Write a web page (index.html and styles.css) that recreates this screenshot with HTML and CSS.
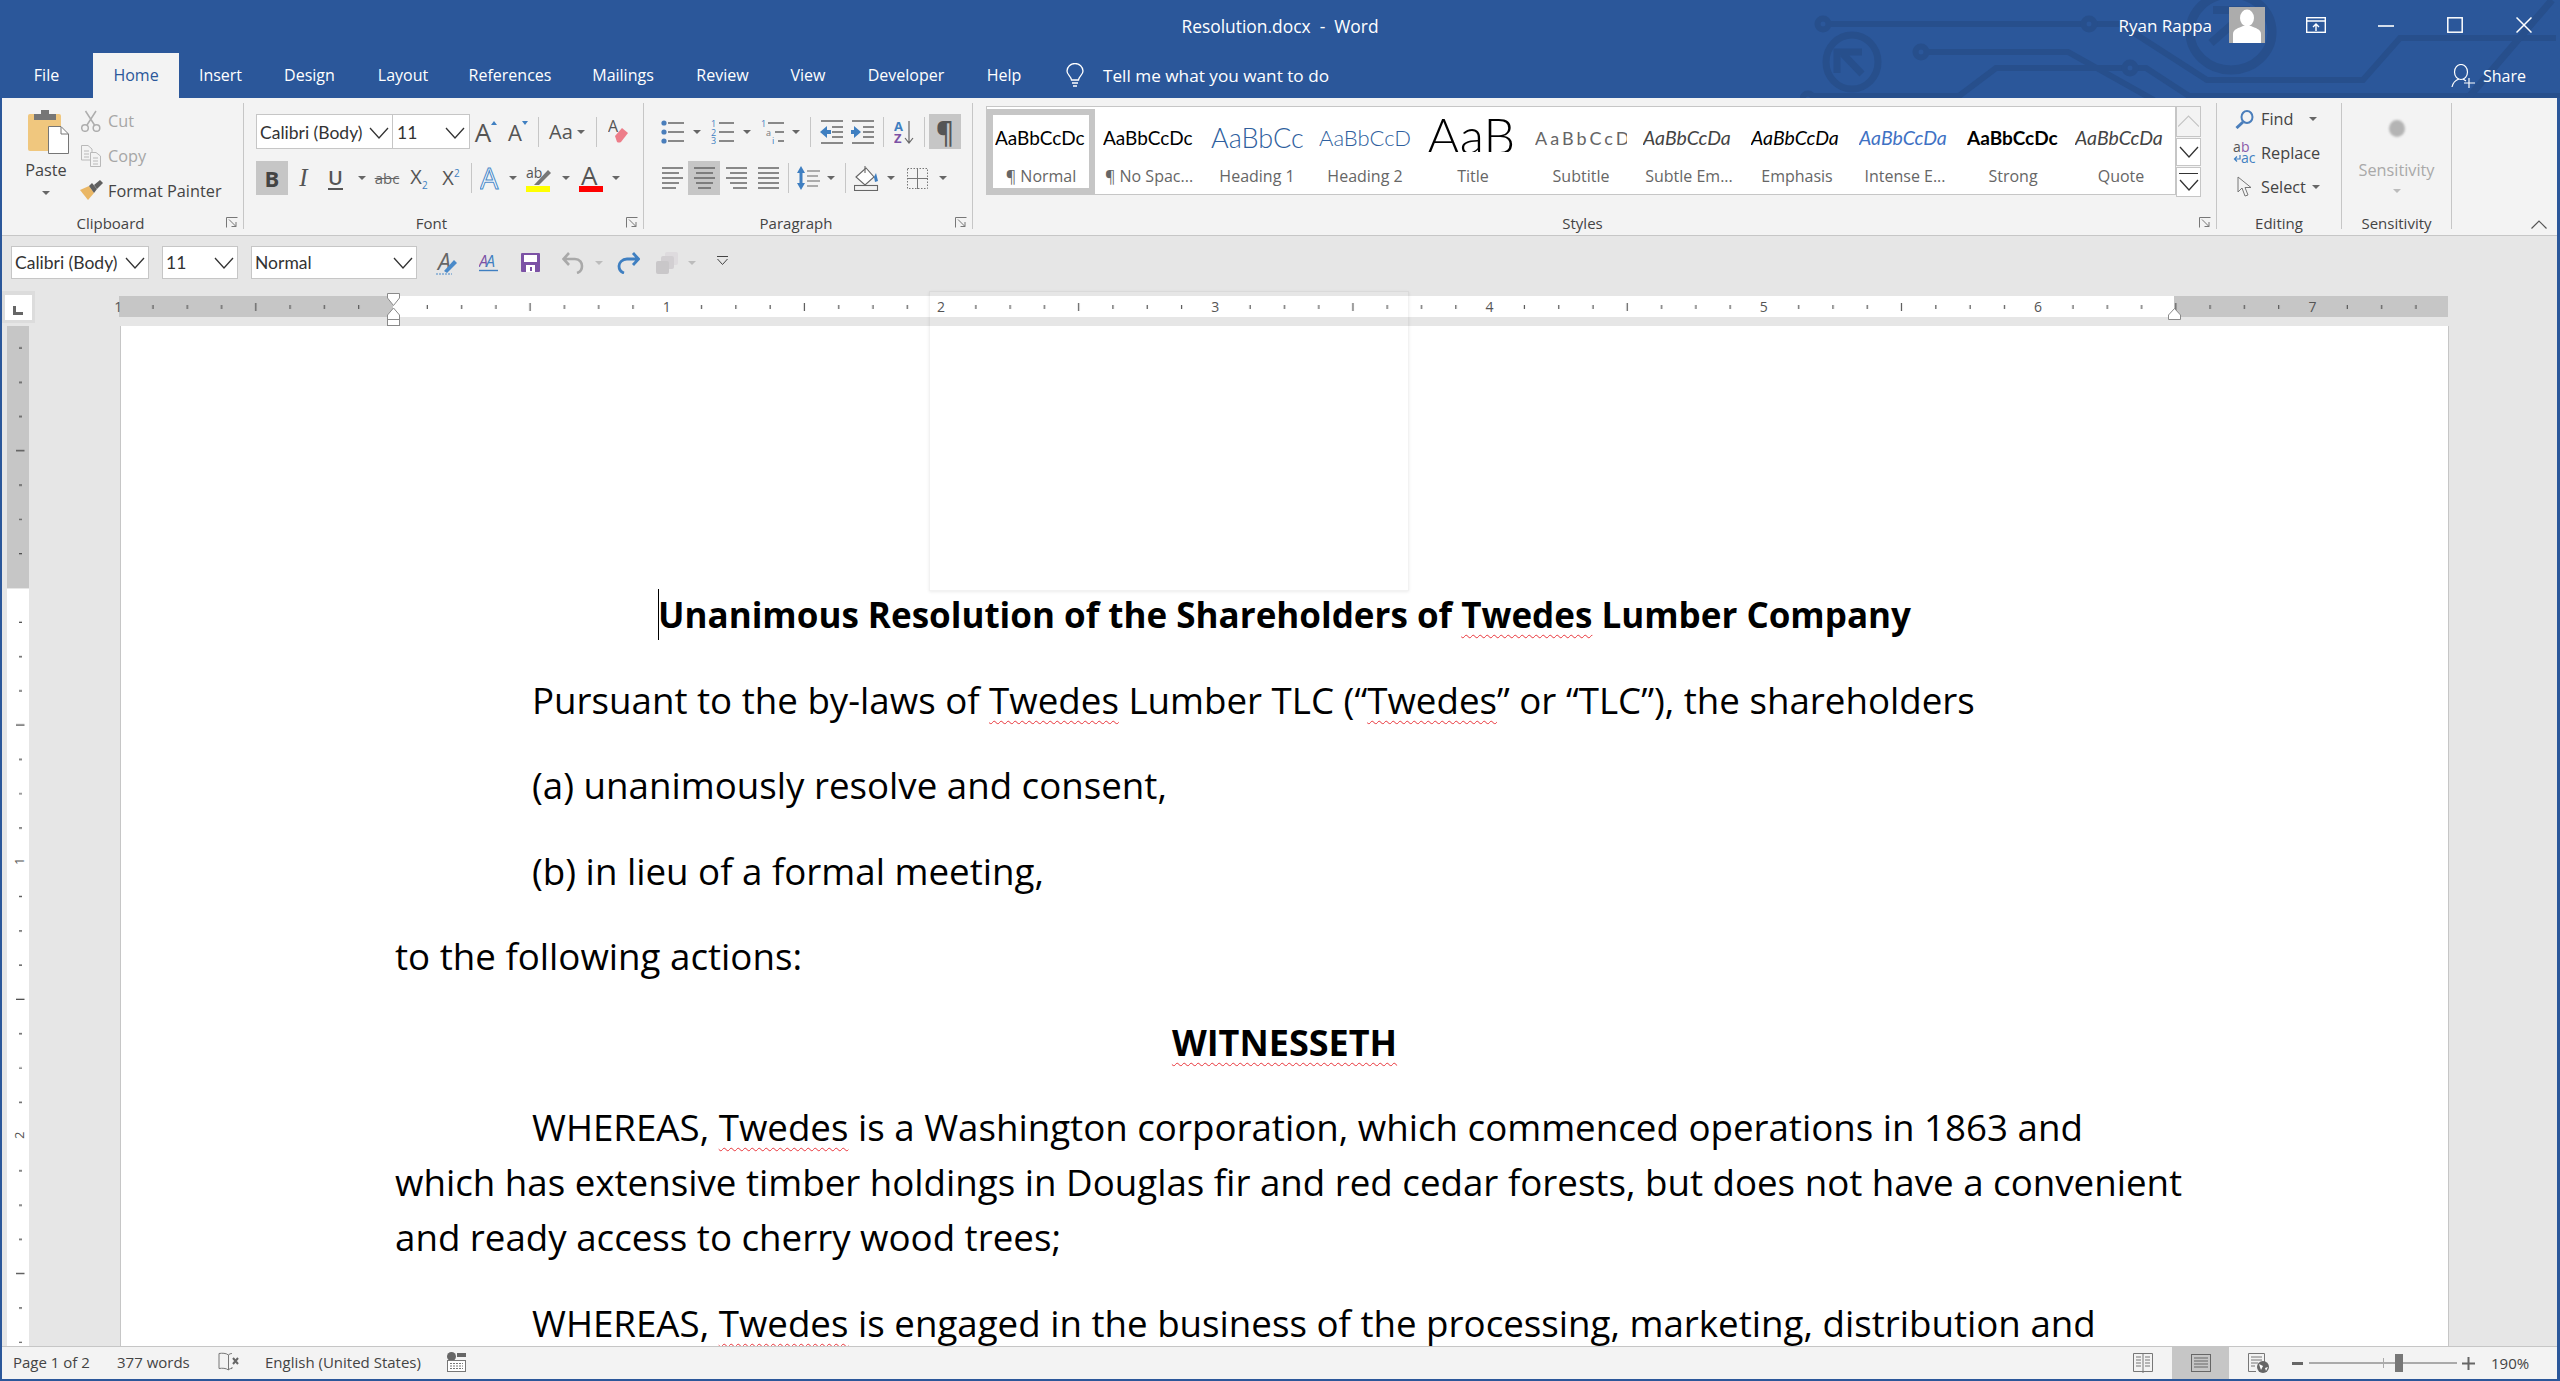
FILE: index.html
```html
<!DOCTYPE html>
<html lang="en">
<head>
<meta charset="utf-8">
<title>Resolution.docx - Word</title>
<link rel="stylesheet" href="styles.css">
</head>
<body>
<div class="window">
  <header class="head">
    <svg class="circuit" width="760" height="98" viewBox="1800 0 760 98" fill="none" stroke="#274f8c" stroke-width="6">
      <circle cx="1823" cy="24" r="5.5"/><path d="M1829 24H2083M2095 24H2120L2207 80H2363L2400 38H2556"/><circle cx="2089" cy="24" r="5.5"/>
      <ellipse cx="1852" cy="62" rx="26" ry="27" stroke-width="7"/><path d="M1837 73V52H1862M1843 54L1862 74" stroke-width="7"/>
      <circle cx="1921" cy="52" r="5.5"/><path d="M1927 52H2068L2154 100"/>
      <circle cx="1808" cy="99" r="5.5"/><path d="M1814 96H1959L1996 68H2124M2136 68H2146L2189 96H2560"/><circle cx="2130" cy="68" r="5.5"/>
      <ellipse cx="2231" cy="32" rx="41" ry="38" stroke-width="9"/><path d="M2211 43L2235 22M2213 10H2250" stroke-width="8"/>
      <path d="M2552 0L2468 98" stroke-width="7"/>
    </svg>
    <div class="titlebar">
      <div></div>
      <div class="doc-title">Resolution.docx&nbsp; - &nbsp;Word</div>
      <div class="win-right">
        <span class="user">Ryan Rappa</span>
        <svg class="avatar" width="36" height="36" viewBox="0 0 36 36"><rect width="36" height="36" fill="#acacac"/><ellipse cx="18" cy="11" rx="7" ry="8.5" fill="#fff"/><path d="M4 36V27C4 22 10 21 14 19H22C26 21 32 22 32 27V36Z" fill="#fff"/></svg>
        <svg class="wbtn w-disp" width="20" height="16" viewBox="0 0 20 16" fill="none" stroke="#fff" stroke-width="1.4"><rect x=".7" y=".7" width="18.6" height="14.6"/><path d="M1 4H19M10 14V7M7 10L10 7L13 10"/></svg>
        <svg class="wbtn w-min" width="16" height="16" viewBox="0 0 16 16" stroke="#fff" stroke-width="1.6"><path d="M0 9H16"/></svg>
        <svg class="wbtn w-max" width="16" height="16" viewBox="0 0 16 16" fill="none" stroke="#fff" stroke-width="1.5"><rect x=".8" y=".8" width="14.4" height="14.4"/></svg>
        <svg class="wbtn w-close" width="16" height="16" viewBox="0 0 16 16" stroke="#fff" stroke-width="1.5"><path d="M.5 .5L15.5 15.5M15.5 .5L.5 15.5"/></svg>
      </div>
    </div>
    <nav class="tabrow">
      <div class="tabs">
        <a class="tab">File</a><a class="tab active">Home</a><a class="tab">Insert</a><a class="tab">Design</a><a class="tab">Layout</a><a class="tab">References</a><a class="tab">Mailings</a><a class="tab">Review</a><a class="tab">View</a><a class="tab">Developer</a><a class="tab">Help</a>
      </div>
      <div class="tellme">
        <svg width="18" height="25" viewBox="0 0 18 25" fill="none" stroke="#fff" stroke-width="1.3"><path d="M5.5 17C5 13 1 12 1 8A8 7.5 0 0 1 17 8C17 12 13 13 12.5 17ZM6 20H12M7 23H11"/></svg>
        <span>Tell me what you want to do</span>
      </div>
      <div class="share">
        <svg width="25" height="24" viewBox="0 0 25 24" fill="none" stroke="#fff" stroke-width="1.2"><ellipse cx="10" cy="8" rx="6.5" ry="7.5"/><path d="M1 23C2 18 5 16 8 15M12 15L15 17M18 14V24M13 19H24"/></svg>
        <span>Share</span>
      </div>
    </nav>
  </header>

  <section class="ribbon">
    <div class="group g-clip">
      <div class="clip-body">
        <div class="paste">
          <svg class="paste-ic" width="41" height="45" viewBox="0 0 41 45"><rect y="5" width="33" height="37" rx="2" fill="#f0c77e"/><path d="M6 11V5H13V1H21V5H28V11Z" fill="#767676"/><path d="M20.5 17.5H33L40.5 25V44.5H20.5Z" fill="#fff" stroke="#767676"/><path d="M33 18V25H40" fill="none" stroke="#767676"/></svg>
          <span class="paste-label">Paste</span>
          <i class="arr"></i>
        </div>
        <div class="clip-list">
          <div class="clip-row dis"><span class="clip-ic"><svg width="20" height="22" viewBox="0 0 20 22" fill="none" stroke="#aeaeae" stroke-width="1.5"><circle cx="4" cy="18" r="3.3"/><circle cx="15.5" cy="18" r="3.3"/><path d="M6 15L15 1M13.5 15L4.5 1"/></svg></span>Cut</div>
          <div class="clip-row dis"><span class="clip-ic"><svg width="20" height="22" viewBox="0 0 20 22" fill="#f3f3f3" stroke="#b9b9b9"><path d="M.5 .5H7L11 4V15H.5Z"/><path d="M9.5 7.5H15L19.5 11V21.5H9.5Z"/><path d="M3 6H8M3 9H8M3 12H8M12 13H17M12 16H17M12 19H17" fill="none"/></svg></span>Copy</div>
          <div class="clip-row"><span class="clip-ic"><svg width="23" height="21" viewBox="0 0 23 21"><path d="M0 10L9 6L14 13L8 20Z" fill="#eab765"/><path d="M9 6L12 3L17 9L14 13Z" fill="#5f5f5f"/><path d="M14 5L20 0L23 3L17 9Z" fill="#5f5f5f"/></svg></span>Format Painter</div>
        </div>
      </div>
      <div class="glabel launch">Clipboard</div>
      <svg class="launcher" width="12" height="11" viewBox="0 0 12 11" fill="none" stroke="#777"><path d="M.5 10.5V.5H11.5M3 2.5L10 9.5M10 5V9.5H5.5"/></svg>
    </div>

    <div class="group g-font">
      <div class="grid font1">
        <div class="combo fontbox"><span>Calibri (Body)</span><svg class="chev" width="20" height="12" viewBox="0 0 20 12" fill="none" stroke="#333" stroke-width="1.3"><path d="M1 1L10 11L19 1"/></svg></div>
        <div class="combo sizebox"><span>11</span><svg class="chev" width="20" height="12" viewBox="0 0 20 12" fill="none" stroke="#333" stroke-width="1.3"><path d="M1 1L10 11L19 1"/></svg></div>
        <div class="c"><span class="glyph-a big">A</span><i class="tri-up"></i></div>
        <div class="c"><span class="glyph-a small">A</span><i class="tri-dn"></i></div>
        <div class="c"><i class="sep"></i></div>
        <div class="c"><span class="glyph-aa">Aa</span><i class="arr arr-l"></i></div>
        <div class="c"><i class="sep"></i></div>
        <div class="c"><svg width="21" height="28" viewBox="0 0 21 28"><text x="0" y="14" class="svgt" font-size="16" fill="#555">A</text><path d="M7 18L14 10L20 15L13 24Q11 25 9 24Z" fill="#ed7d89"/></svg></div>
      </div>
      <div class="grid font2">
        <div class="c on"><b class="glyph-b">B</b></div>
        <div class="c"><i class="glyph-i">I</i></div>
        <div class="c"><span class="glyph-u">U</span></div>
        <div class="c"><i class="arr"></i></div>
        <div class="c"><span class="glyph-abc">abc</span></div>
        <div class="c"><span class="glyph-x">X<sub>2</sub></span></div>
        <div class="c"><span class="glyph-x">X<sup>2</sup></span></div>
        <div class="c"><i class="sep"></i></div>
        <div class="c"><svg width="22" height="26" viewBox="0 0 22 26"><text x="0" y="24" class="svgt" font-size="29" fill="#fff" stroke="#4a8ac9" stroke-width="1">A</text></svg></div>
        <div class="c"><i class="arr"></i></div>
        <div class="c"><svg width="26" height="27" viewBox="0 0 26 27"><text x="0" y="13" class="svgt" font-size="14" fill="#555">ab</text><path d="M8 20L22 5L25 8L13 20Z" fill="#777"/><rect y="21" width="24" height="6" fill="#ff0"/></svg></div>
        <div class="c"><i class="arr"></i></div>
        <div class="c"><svg width="24" height="27" viewBox="0 0 24 27"><text x="2" y="20" class="svgt" font-size="26" fill="#555">A</text><rect y="21" width="24" height="6" fill="#f00"/></svg></div>
        <div class="c"><i class="arr"></i></div>
      </div>
      <div class="glabel launch lab-font">Font</div>
      <svg class="launcher" width="12" height="11" viewBox="0 0 12 11" fill="none" stroke="#777"><path d="M.5 10.5V.5H11.5M3 2.5L10 9.5M10 5V9.5H5.5"/></svg>
    </div>

    <div class="group g-para">
      <div class="grid para1">
        <div class="c"><svg width="23" height="24" viewBox="0 0 23 24" fill="none" stroke="#666" stroke-width="1.3"><path d="M7 3H23M7 12H23M7 21H23"/><g fill="#4a7ebb" stroke="none"><circle cx="3" cy="3" r="2.6"/><circle cx="3" cy="12" r="2.6"/><circle cx="3" cy="21" r="2.6"/></g></svg></div>
        <div class="c"><i class="arr"></i></div>
        <div class="c"><svg width="23" height="24" viewBox="0 0 23 24"><g class="svgt" font-size="9" fill="#3f7fc1"><text x="0" y="7">1</text><text x="0" y="15.5">2</text><text x="0" y="24">3</text></g><path d="M8 3H23M8 12H23M8 21H23" stroke="#666" stroke-width="1.3"/></svg></div>
        <div class="c"><i class="arr"></i></div>
        <div class="c"><svg width="23" height="24" viewBox="0 0 23 24"><g class="svgt" font-size="9" fill="#3f7fc1"><text x="0" y="7">1</text><text x="5" y="15.5" fill="#777">a</text><text x="11" y="24">i</text></g><path d="M7 3H23M14 12H23M17 21H23" stroke="#666" stroke-width="1.3"/></svg></div>
        <div class="c"><i class="arr"></i></div>
        <div class="c"><i class="sep"></i></div>
        <div class="c"><svg width="23" height="24" viewBox="0 0 23 24" fill="none" stroke="#666" stroke-width="1.3"><path d="M1 1H23M12 7H23M12 12H23M12 17H23M1 23H23"/><path d="M0 12L7 6V10H11V14H7V18Z" fill="#3f7fc1" stroke="none"/></svg></div>
        <div class="c"><svg width="23" height="24" viewBox="0 0 23 24" fill="none" stroke="#666" stroke-width="1.3"><path d="M1 1H23M12 7H23M12 12H23M12 17H23M1 23H23"/><path d="M10 12L3 6V10H0V14H3V18Z" fill="#3f7fc1" stroke="none"/></svg></div>
        <div class="c"><i class="sep"></i></div>
        <div class="c"><svg width="21" height="24" viewBox="0 0 21 24"><text x="0" y="11" class="svgt bold" font-size="13" fill="#3f7fc1">A</text><text x="0" y="23" class="svgt bold" font-size="13" fill="#7c52a5">Z</text><path d="M15 1V22M11 18L15 23L19 18" fill="none" stroke="#666" stroke-width="1.2"/></svg></div>
        <div class="c"><i class="sep"></i></div>
        <div></div>
        <div class="c on"><span class="pil">¶</span></div>
      </div>
      <div class="grid para2">
        <div class="c"><svg class="al" width="21" height="22" viewBox="0 0 21 22"><path d="M0 1H21M0 6H17M0 11H21M0 16H17M0 21H14"/></svg></div>
        <div class="c on"><svg class="al" width="21" height="22" viewBox="0 0 21 22"><path d="M0 1H21M2 6H19M0 11H21M2 16H19M4 21H17"/></svg></div>
        <div class="c"><svg class="al" width="21" height="22" viewBox="0 0 21 22"><path d="M0 1H21M4 6H21M0 11H21M4 16H21M7 21H21"/></svg></div>
        <div class="c"><svg class="al" width="21" height="22" viewBox="0 0 21 22"><path d="M0 1H21M0 6H21M0 11H21M0 16H21M0 21H21"/></svg></div>
        <div class="c"><i class="sep"></i></div>
        <div class="c"><svg width="23" height="24" viewBox="0 0 23 24"><path d="M4 0L8 7H5.5V17H8L4 24L0 17H2.5V7H0Z" fill="#3f7fc1"/><path d="M10 5H23M10 10H21M10 15H23M10 20H21" stroke="#666" stroke-width="1.2"/></svg></div>
        <div class="c"><i class="arr"></i></div>
        <div class="c"><i class="sep"></i></div>
        <div class="c"><svg width="25" height="25" viewBox="0 0 25 25" fill="none" stroke="#666" stroke-width="1.1"><path d="M2 11L12 2L20 11L11 19Z" fill="#fff"/><path d="M11 0V7"/><path d="M20 11L22 7L24 15L21 16Z" fill="#3f7fc1" stroke="none"/><rect x=".5" y="19.5" width="23" height="5" fill="#f3f3f3"/></svg></div>
        <div class="c"><i class="arr"></i></div>
        <div class="c"><svg width="21" height="21" viewBox="0 0 21 21" fill="none" stroke="#777" stroke-dasharray="1.5 1.5"><rect x=".5" y=".5" width="20" height="20"/><path d="M10.5 0V21M0 10.5H21" stroke-dasharray="none"/></svg></div>
        <div class="c"><i class="arr"></i></div>
      </div>
      <div class="glabel launch">Paragraph</div>
      <svg class="launcher" width="12" height="11" viewBox="0 0 12 11" fill="none" stroke="#777"><path d="M.5 10.5V.5H11.5M3 2.5L10 9.5M10 5V9.5H5.5"/></svg>
    </div>

    <div class="group g-styles">
      <div class="gallery-wrap">
        <div class="gallery">
          <div class="style sel"><div class="pv">AaBbCcDc</div><div class="st-name">¶ Normal</div></div>
          <div class="style"><div class="pv">AaBbCcDc</div><div class="st-name">¶ No Spac...</div></div>
          <div class="style"><div class="pv h1">AaBbCc</div><div class="st-name">Heading 1</div></div>
          <div class="style"><div class="pv h2">AaBbCcD</div><div class="st-name">Heading 2</div></div>
          <div class="style"><div class="pv ttl"><span>AaB</span></div><div class="st-name">Title</div></div>
          <div class="style"><div class="pv sub">AaBbCcD</div><div class="st-name">Subtitle</div></div>
          <div class="style"><div class="pv em gr">AaBbCcDa</div><div class="st-name">Subtle Em...</div></div>
          <div class="style"><div class="pv em">AaBbCcDa</div><div class="st-name">Emphasis</div></div>
          <div class="style"><div class="pv em bl">AaBbCcDa</div><div class="st-name">Intense E...</div></div>
          <div class="style"><div class="pv strong">AaBbCcDc</div><div class="st-name">Strong</div></div>
          <div class="style"><div class="pv em gr">AaBbCcDa</div><div class="st-name">Quote</div></div>
        </div>
        <div class="gal-scroll">
          <div class="gs"><svg width="21" height="12" viewBox="0 0 21 12" fill="none" stroke="#c4c4c4" stroke-width="1.2"><path d="M0 11.5L10.5 1L21 11.5"/></svg></div>
          <div class="gs"><svg width="20" height="12" viewBox="0 0 20 12" fill="none" stroke="#333" stroke-width="1.3"><path d="M1 1L10 11L19 1"/></svg></div>
          <div class="gs gs-more"><i class="more-bar"></i><svg width="20" height="12" viewBox="0 0 20 12" fill="none" stroke="#333" stroke-width="1.3"><path d="M1 1L10 11L19 1"/></svg></div>
        </div>
      </div>
      <div class="glabel launch lab-styles">Styles</div>
      <svg class="launcher" width="12" height="11" viewBox="0 0 12 11" fill="none" stroke="#777"><path d="M.5 10.5V.5H11.5M3 2.5L10 9.5M10 5V9.5H5.5"/></svg>
    </div>

    <div class="group g-edit">
      <div class="edit-list">
        <div class="edit-row"><span class="edit-ic"><svg width="19" height="19" viewBox="0 0 19 19" fill="none" stroke="#4a7ebb" stroke-width="2"><ellipse cx="12" cy="7" rx="5.5" ry="6"/><path d="M8 12L1.5 18" stroke-width="3"/></svg></span>Find<i class="arr arr-find"></i></div>
        <div class="edit-row"><span class="edit-ic"><svg width="23" height="22" viewBox="0 0 23 22"><text x="0" y="10" class="svgt" font-size="14" fill="#555">a</text><text x="8" y="10" class="svgt" font-size="14" fill="#8a5aa8">b</text><text x="8" y="21" class="svgt" font-size="14" fill="#3f7fc1">ac</text><path d="M7 13V17H2M4 14.5L1.5 17L4 19.5" fill="none" stroke="#3f7fc1" stroke-width="1.2"/></svg></span>Replace</div>
        <div class="edit-row"><span class="edit-ic"><svg width="15" height="22" viewBox="0 0 15 22" fill="#f3f3f3" stroke="#777"><path d="M1 1V16L5 12L8 20L11 19L8 11.5H14Z"/></svg></span>Select<i class="arr arr-sel"></i></div>
      </div>
      <div class="glabel">Editing</div>
    </div>

    <div class="group g-sens">
      <div class="sens-body">
        <i class="sens-dot"></i>
        <span class="sens-text">Sensitivity</span>
        <i class="arr arr-dis"></i>
      </div>
      <div class="glabel">Sensitivity</div>
    </div>

    <div class="ribbon-end">
      <svg width="16" height="9" viewBox="0 0 16 9" fill="none" stroke="#555" stroke-width="1.2"><path d="M.5 8.5L8 1L15.5 8.5"/></svg>
    </div>
  </section>

  <main class="editor">
    <div class="qat">
      <div class="combo q-font"><span>Calibri (Body)</span><svg width="20" height="12" viewBox="0 0 20 12" fill="none" stroke="#333" stroke-width="1.3"><path d="M1 1L10 11L19 1"/></svg></div>
      <div class="combo q-size"><span>11</span><svg width="20" height="12" viewBox="0 0 20 12" fill="none" stroke="#333" stroke-width="1.3"><path d="M1 1L10 11L19 1"/></svg></div>
      <div class="combo q-style"><span>Normal</span><svg width="20" height="12" viewBox="0 0 20 12" fill="none" stroke="#333" stroke-width="1.3"><path d="M1 1L10 11L19 1"/></svg></div>
      <div class="qat-icons">
        <div class="c"><svg width="22" height="24" viewBox="0 0 22 24"><text x="2" y="19" class="svgt ital" font-size="23" fill="#666">A</text><path d="M8 20L18 9L21 12L11 22Z" fill="#4a8ac9"/><path d="M0 23H16" stroke="#4a8ac9" stroke-dasharray="2 1"/></svg></div>
        <div class="c"><svg width="19" height="19" viewBox="0 0 19 19"><text x="0" y="14" class="svgt ital" font-size="16" fill="#7c52a5">A</text><text x="7" y="14" class="svgt ital" font-size="16" fill="#3f7fc1">A</text><path d="M0 17.5H19" stroke="#3f7fc1" stroke-width="1.4"/></svg></div>
        <div class="c"><svg width="19" height="19" viewBox="0 0 19 19"><path d="M0 1Q0 0 1 0H18Q19 0 19 1V18Q19 19 18 19H1Q0 19 0 18Z" fill="#7c52a5"/><rect x="3" y="2" width="13" height="7" fill="#fff"/><rect x="5" y="12" width="9" height="7" fill="#fff"/><rect x="9" y="14" width="2" height="4" fill="#7c52a5"/></svg></div>
        <div class="c"><svg width="22" height="22" viewBox="0 0 22 22" fill="none" stroke="#a9a9a9" stroke-width="2.6"><path d="M2 7H13C18 7 20 11 20 14C20 17 18 20 15 21M7 1L1.5 7L7 13"/></svg></div>
        <div class="c"><i class="arr arr-dis"></i></div>
        <div class="c"><svg width="23" height="22" viewBox="0 0 23 22" fill="none" stroke="#3f7fc1" stroke-width="2.8"><path d="M21 7H10C5 7 2 11 2 14C2 17 4 20 7 21M16 1L21.5 7L16 13"/></svg></div>
        <div class="c"><svg width="22" height="22" viewBox="0 0 22 22"><rect x="9" y="0" width="13" height="13" rx="2" fill="#dedbde"/><rect x="5" y="4" width="13" height="13" rx="2" fill="#d2cfd2"/><rect x="0" y="9" width="13" height="13" rx="2" fill="#c9c7c9"/></svg></div>
        <div class="c"><i class="arr arr-dis"></i></div>
        <div class="c"><svg class="cust" width="11" height="9" viewBox="0 0 11 9" fill="none" stroke="#444"><path d="M0 .5H11M.5 3L5.5 8.5L10.5 3"/></svg></div>
      </div>
    </div>

    <div class="ruler-row">
      <div class="tabstop"><span class="tabstop-in"><svg width="10" height="9" viewBox="0 0 10 9" fill="#666"><path d="M0 0H3V6H10V9H0Z"/></svg></span></div>
      <div class="ruler">
        <div class="rseg gray-l"></div><div class="rseg white"></div><div class="rseg gray-r"></div>
        <svg class="rticks" width="2329" height="21" viewBox="0 0 2329 21">
          <defs><pattern id="ht" patternUnits="userSpaceOnUse" x="274" y="0" width="274.286" height="21"><path d="M34.3 9V13M68.6 9V13M102.9 9V13M137.1 7V15M171.4 9V13M205.7 9V13M240 9V13" stroke="#555" stroke-width="1.2"/></pattern></defs>
          <rect width="2329" height="21" fill="url(#ht)"/>
        </svg>
        <div class="rnums"><span>1</span><span></span><span>1</span><span>2</span><span>3</span><span>4</span><span>5</span><span>6</span><span>7</span></div>
        <svg class="ind-l" width="13" height="33" viewBox="0 0 13 33" fill="#fff" stroke="#8a8a8a"><path d="M.5 .5H12.5V5L6.5 12.5L.5 5Z"/><path d="M6.5 15L12.5 22V26.5H.5V22Z"/><rect x=".5" y="26.5" width="12" height="6"/></svg>
        <svg class="ind-r" width="13" height="12" viewBox="0 0 13 12" fill="#fff" stroke="#8a8a8a"><path d="M6.5 .5L12.5 7V11.5H.5V7Z"/></svg>
      </div>
    </div>

    <div class="workspace">
      <svg class="vruler" width="22" height="1021" viewBox="0 0 22 1021">
        <defs><pattern id="vt" patternUnits="userSpaceOnUse" x="0" y="263" width="22" height="274.286"><path d="M12 34.3H15M12 68.6H15M12 102.9H15M9 137.1H17.5M12 171.4H15M12 205.7H15M12 240H15" stroke="#444" stroke-width="1.2"/></pattern></defs>
        <rect y="1" width="22" height="262" fill="#c6c6c6"/><rect y="264" width="22" height="757" fill="#fff"/>
        <rect y="1" width="22" height="1020" fill="url(#vt)"/>
        <text class="svgt" font-size="13" fill="#555" transform="translate(17 540) rotate(-90)">1</text>
        <text class="svgt" font-size="13" fill="#555" transform="translate(17 814) rotate(-90)">2</text>
      </svg>
      <div class="page">
        <h1 class="title t-main"><span class="caret"></span>Unanimous Resolution of the Shareholders of <span class="sp">Twedes</span> Lumber Company</h1>
        <p class="p ind">Pursuant to the by-laws of <span class="sp">Twedes</span> Lumber TLC (“<span class="sp">Twedes</span>” or “TLC”), the shareholders</p>
        <p class="p ind">(a) unanimously resolve and consent,</p>
        <p class="p ind">(b) in lieu of a formal meeting,</p>
        <p class="p">to the following actions:</p>
        <h2 class="title t-sub"><span class="sp">WITNESSETH</span></h2>
        <p class="p ind">WHEREAS, <span class="sp">Twedes</span> is a Washington corporation, which commenced operations in 1863 and<br>which has extensive timber holdings in Douglas fir and red cedar forests, but does not have a convenient<br>and ready access to cherry wood trees;</p>
        <p class="p ind">WHEREAS, <span class="sp">Twedes</span> is engaged in the business of the processing, marketing, distribution and</p>
      </div>
    </div>
    <div class="ghost"></div>
  </main>

  <footer class="status">
    <span class="s-page">Page 1 of 2</span>
    <span class="s-words">377 words</span>
    <svg class="s-proof" width="21" height="20" viewBox="0 0 21 20" fill="none" stroke="#777"><path d="M10.5 3C8 1 4 1 1 1.5V16.5C4 16 8 16 10.5 18C11 17 12 16.5 14 16.5V15M10.5 3V18M10.5 3C11 2 13 1.5 14 1.5"/><path d="M15 6L20 12M20 6L15 12" stroke="#666" stroke-width="2"/></svg>
    <span class="s-lang">English (United States)</span>
    <svg class="s-macro" width="19" height="20" viewBox="0 0 19 20"><circle cx="4.5" cy="4.5" r="4.5" fill="#666"/><rect x="10" y="1" width="9" height="4" fill="#666"/><rect x=".5" y="8.5" width="18" height="11" fill="#fff" stroke="#777"/><path d="M3 11.5H16M3 14H16M3 16.5H16" stroke="#777" stroke-dasharray="2 1"/></svg>
    <div class="s-right">
      <div class="view v-read"><svg width="20" height="21" viewBox="0 0 20 21" fill="none" stroke="#777"><path d="M.5 .5H19.5V18.5H.5ZM10 .5V20"/><path d="M3 4H8M3 7H8M3 10H8M3 13H8M12 4H17M12 7H17M12 10H17M12 13H17"/></svg></div>
      <div class="view v-print"><svg width="20" height="18" viewBox="0 0 20 18" fill="none" stroke="#666"><rect x=".5" y=".5" width="19" height="17"/><path d="M3 4H17M3 7H17M3 10H17M3 13H17"/></svg></div>
      <div class="view v-web"><svg width="21" height="20" viewBox="0 0 21 20"><path d="M.5 .5H16.5V10M8 18.5H.5V.5" fill="none" stroke="#777"/><path d="M3 4H14M3 7H14M3 10H10M3 13H7" stroke="#777"/><circle cx="15" cy="14" r="6" fill="#666"/><path d="M11 11L15 13L13 17ZM17 15L20 14L18 18Z" fill="#fff"/></svg></div>
      <div class="zoom">
        <i class="z-minus"></i>
        <div class="z-track"><i class="z-mid"></i><i class="z-thumb"></i></div>
        <svg class="z-plus" width="13" height="13" viewBox="0 0 13 13" stroke="#666" stroke-width="2"><path d="M0 6.5H13M6.5 0V13"/></svg>
      </div>
      <span class="z-pct">190%</span>
    </div>
  </footer>
</div>
</body>
</html>
```

FILE: styles.css
```css
* { box-sizing: border-box; }
html, body { margin: 0; padding: 0; }
body { width: 2560px; height: 1381px; overflow: hidden; background: #2b579a; font-family: "Open Sans", "Noto Sans", sans-serif; font-size: 14px; color: #444; }
i { font-style: normal; display: block; }
.svgt { font-family: "Open Sans", sans-serif; }
.bold { font-weight: 700; }
.ital { font-style: italic; }
.window { width: 2560px; height: 1381px; display: flex; flex-direction: column; }

/* title bar */
.head { position: relative; height: 98px; flex: none; color: #fff; }
.circuit { position: absolute; top: 0; right: 0; }
.titlebar { position: relative; height: 53px; display: grid; grid-template-columns: 1fr auto 1fr; }
.doc-title { font-size: 17.4px; line-height: 52px; white-space: nowrap; }
.win-right { display: flex; justify-content: flex-end; align-items: flex-start; }
.user { font-size: 17px; line-height: 52px; margin-right: 17px; }
.avatar { margin-top: 7px; }
.wbtn { margin-top: 17px; flex: none; }
.w-disp { margin-left: 41px; }
.w-min { margin-left: 52px; }
.w-max { margin-left: 53px; }
.w-close { margin-left: 53px; margin-right: 28px; }
.tabrow { position: relative; height: 45px; display: flex; font-size: 16px; }
.tabs { display: grid; grid-template-columns: 93px 86px 83px 95px 92px 122px 104px 95px 76px 120px 76px; height: 45px; }
.tab { text-align: center; line-height: 44px; color: #fff; }
.tab.active { background: #f3f3f3; color: #2b579a; }
.tellme { display: flex; align-items: center; margin-left: 24px; height: 45px; font-size: 17.2px; }
.tellme span { margin-left: 19px; }
.share { margin-left: auto; margin-right: 34px; display: flex; align-items: center; height: 45px; gap: 7px; }

/* ribbon */
.ribbon { height: 138px; flex: none; margin: 0 3px 0 2px; background: #f3f3f3; border-bottom: 1px solid #c6c6c6; padding: 5px 0 6px; display: flex; font-size: 16.3px; }
.group { position: relative; height: 126px; flex: none; display: flex; flex-direction: column; border-right: 1px solid #c6c6c6; }
.g-clip { width: 242px; }
.g-font { width: 400px; padding: 11px 0 0 12px; }
.g-para { width: 329px; padding: 11px 0 0 12px; }
.g-styles { width: 1244px; padding: 3px 0 0 13px; }
.g-edit { width: 125px; }
.g-sens { width: 110px; }
.glabel { margin-top: auto; margin-bottom: -1px; height: 14px; line-height: 14px; font-size: 15px; color: #444; text-align: center; }
.glabel.launch { padding-right: 24px; }
.g-font .glabel, .g-para .glabel { margin-left: -12px; }
.g-styles .glabel { margin-left: -13px; }
.launcher { position: absolute; right: 5px; bottom: 1px; }
.c { display: flex; align-items: center; justify-content: center; min-width: 0; }
.c.on { background: #c6c6c6; }
.grid { display: grid; }
.arr { width: 0; height: 0; border-left: 4px solid transparent; border-right: 4px solid transparent; border-top: 4px solid #666; flex: none; }
.arr-dis { border-top-color: #bcbcbc; }
.sep { width: 1px; height: 30px; background: #c6c6c6; }

/* clipboard */
.clip-body { display: flex; padding: 0 0 0 16px; }
.paste { width: 56px; display: flex; flex-direction: column; align-items: center; padding-top: 6px; }
.paste-ic { margin-left: 5px; flex: none; }
.paste-label { line-height: 20px; margin-top: 6px; }
.paste .arr { margin-top: 11px; }
.clip-list { padding-left: 4px; }
.clip-row { height: 35px; display: flex; align-items: center; white-space: nowrap; }
.clip-row.dis { color: #a6a6a6; }
.clip-ic { width: 26px; margin-right: 4px; display: flex; justify-content: center; }

/* font */
.font1 { grid-template-columns: 137px 77px 32px 32px 8px 50px 8px 36px; height: 35px; }
.font2 { grid-template-columns: 32px 31px 33px 19px 32px 32px 32px 8px 31px 14px 38px 16px 33px 18px; height: 34px; margin-top: 12px; }
.combo { display: flex; align-items: center; justify-content: space-between; background: #fff; border: 1px solid #c6c6c6; padding: 0 3px 0 3px; font-family: "Lato", sans-serif; font-size: 17.5px; color: #333; white-space: nowrap; overflow: hidden; }
.fontbox { padding-top: 2px; }
.sizebox { margin-left: -1px; padding: 2px 4px 0 4px; }
.font1 .sep { height: 30px; }
.glyph-a { color: #555; }
.big { font-size: 26px; line-height: 1; }
.small { font-size: 22px; line-height: 1; }
.tri-up, .tri-dn { width: 0; height: 0; border-left: 3px solid transparent; border-right: 3px solid transparent; align-self: flex-start; margin-top: 7px; }
.tri-up { border-bottom: 4px solid #3f7fc1; }
.tri-dn { border-top: 4px solid #3f7fc1; }
.glyph-aa { color: #555; font-size: 20px; line-height: 1; }
.arr-l { margin-left: 4px; }
.glyph-b { font-size: 22px; color: #444; font-family: "Open Sans", sans-serif; }
.glyph-i { font-size: 25px; font-style: italic; color: #555; font-family: "Liberation Serif", serif; }
.glyph-u { font-size: 20px; color: #555; font-weight: 600; border-bottom: 2px solid #555; line-height: 21px; }
.glyph-abc { font-size: 15px; color: #666; text-decoration: line-through; }
.glyph-x { font-size: 20px; color: #555; line-height: 1; }
.glyph-x sub, .glyph-x sup { font-size: 10px; color: #3f7fc1; }

/* paragraph */
.para1 { grid-template-columns: 32px 18px 32px 18px 33px 14px 14px 28px 34px 8px 34px 6px 2px 32px; height: 35px; }
.para2 { grid-template-columns: 32px 32px 32px 32px 8px 32px 14px 14px 28px 22px 30px 21px; height: 34px; margin-top: 12px; }
.pil { font-size: 28px; line-height: 1; color: #555; font-weight: 600; }
.al { stroke: #666; stroke-width: 1.3; fill: none; }

/* styles */
.gallery-wrap { display: flex; height: 91px; }
.gallery { width: 1190px; height: 89px; background: #fff; border: 1px solid #c6c6c6; display: flex; font-family: "Lato", sans-serif; }
.style { width: 108px; flex: none; height: 85px; margin-top: 2px; display: flex; flex-direction: column; align-items: center; overflow: hidden; }
.style.sel { box-shadow: inset 0 0 0 6px #c6c6c6; }
.pv { height: 57px; width: 92px; line-height: 58px; overflow: hidden; white-space: nowrap; font-size: 19px; color: #000; flex: none; }
.h1 { font-size: 27px; color: #2f5f9e; font-weight: 300; }
.h2 { font-size: 22px; color: #2f5f9e; font-weight: 300; }
.ttl { display: flex; align-items: flex-start; }
.ttl span { display: block; height: 34px; margin-top: 9px; line-height: 34px; font-size: 50px; font-weight: 300; overflow: hidden; }
.sub { font-size: 18px; letter-spacing: 3px; color: #666; }
.em { font-style: italic; font-size: 19.5px; }
.gr { color: #444; }
.bl { color: #3f72c4; }
.strong { font-weight: 700; }
.st-name { font-family: "Open Sans", sans-serif; font-size: 16px; color: #666; line-height: 20px; white-space: nowrap; }
.gal-scroll { width: 25px; display: flex; flex-direction: column; }
.gs { height: 30px; border: 1px solid #c6c6c6; display: flex; align-items: center; justify-content: center; background: #fff; }
.gs:first-child { background: #f3f3f3; height: 31px; }
.gs:nth-child(2) { height: 29px; margin-top: 1px; }
.gs-more { flex-direction: column; gap: 5px; height: 30px; margin-top: 1px; }
.more-bar { width: 19px; height: 1px; background: #333; }

/* editing */
.edit-list { display: flex; flex-direction: column; margin-top: -1px; }
.edit-row { height: 34px; display: flex; align-items: center; padding-left: 10px; white-space: nowrap; }
.edit-ic { width: 34px; display: flex; justify-content: center; }
.arr-find { margin-left: 16px; }
.arr-sel { margin-left: 6px; }
.sens-body { display: flex; flex-direction: column; align-items: center; padding-top: 17px; color: #a9a9a9; }
.sens-dot { width: 16px; height: 17px; border-radius: 50%; background: #b4b4b4; filter: blur(1px); }
.sens-text { margin-top: 23px; line-height: 20px; }
.sens-body .arr { margin-top: 9px; }
.ribbon-end { flex: 1; display: flex; justify-content: flex-end; align-items: flex-end; padding: 0 10px 0 0; }

/* editor */
.editor { position: relative; flex: 1; min-height: 0; margin: 0 3px 0 2px; background: #e6e6e6; display: flex; flex-direction: column; overflow: hidden; }
.qat { height: 55px; flex: none; padding: 10px 0 12px 9px; display: flex; }
.q-font { width: 138px; }
.q-size { width: 76px; margin-left: 13px; }
.q-style { width: 166px; margin-left: 13px; }
.qat-icons { display: grid; grid-template-columns: 44px 38px 46px 40px 12px 46px 32px 17px 45px; margin-left: 8px; }
.cust { margin-top: -5px; }
.ruler-row { height: 34px; flex: none; display: flex; }
.tabstop { width: 33px; height: 32px; background: #dcdcdc; padding: 4px 3px; flex: none; }
.tabstop-in { display: block; background: #fff; height: 25px; padding: 11px 0 0 8px; }
.tabstop-in svg { display: block; }
.ruler { position: relative; margin: 5px 0 0 84px; width: 2329px; height: 21px; display: flex; font-size: 14px; color: #555; }
.rseg { height: 21px; }
.gray-l { width: 274px; background: #c6c6c6; }
.white { width: 1781px; background: #fff; }
.gray-r { width: 274px; background: #c6c6c6; }
.rticks { position: absolute; left: 0; top: 0; }
.rnums { position: absolute; left: -138px; top: 0; display: flex; height: 21px; line-height: 21px; }
.rnums span { width: 274.286px; text-align: center; flex: none; }
.ind-l { position: absolute; left: 268px; top: -3px; }
.ind-r { position: absolute; left: 2049px; top: 12px; }
.workspace { flex: 1; min-height: 0; display: flex; overflow: hidden; }
.vruler { margin-left: 5px; flex: none; display: block; }
.page { width: 2329px; margin-left: 91px; margin-top: 1px; background: #fff; border-left: 1px solid #c6c6c6; border-right: 1px solid #c6c6c6; padding: 261px 274px 0 274px; color: #000; font-family: "Open Sans", sans-serif; font-size: 36.7px; line-height: 55px; flex: none; overflow: hidden; white-space: nowrap; }
.title { margin: 0 0 30.5px; font: inherit; font-weight: 700; text-align: center; }
.t-main { font-size: 35px; }
.t-sub { font-size: 36px; }
.p { margin: 0 0 30.5px; }
.ind { text-indent: 137px; }
.caret { display: inline-block; width: 1px; height: 51px; background: #000; vertical-align: -12px; margin-right: -1px; }
.sp { text-decoration: underline wavy #e8343a; text-decoration-thickness: 1px; text-underline-offset: 6px; text-decoration-skip-ink: none; }
.ghost { position: absolute; left: 927px; top: 55px; width: 480px; height: 300px; border: 1px solid rgba(0,0,0,.05); box-shadow: 0 1px 3px rgba(0,0,0,.08); pointer-events: none; }

/* status */
.status { height: 33px; flex: none; margin: 0 3px 2px 2px; background: #f3f3f3; border-top: 1px solid #c6c6c6; padding-bottom: 2px; display: flex; align-items: center; font-size: 15px; color: #444; white-space: nowrap; }
.s-page { margin-left: 11px; width: 104px; }
.s-words { width: 101px; }
.s-proof { width: 21px; }
.s-lang { margin-left: 26px; width: 182px; }
.s-right { margin-left: auto; display: flex; align-items: center; height: 32px; margin-bottom: -2px; }
.view { height: 32px; display: flex; align-items: center; justify-content: center; }
.v-read { width: 20px; margin-right: 19px; }
.v-print { width: 57px; background: #c6c6c6; }
.v-web { margin-left: 19px; width: 21px; }
.zoom { display: flex; align-items: center; }
.z-minus { width: 11px; height: 3px; background: #666; margin-left: 23px; }
.z-track { position: relative; width: 148px; height: 2px; background: #aaa; margin: 0 5px 0 6px; }
.z-mid { position: absolute; left: 74px; top: -4px; width: 1px; height: 10px; background: #aaa; }
.z-thumb { position: absolute; left: 86px; top: -8px; width: 8px; height: 18px; background: #777; }
.z-pct { margin-left: 16px; margin-right: 27px; width: 39px; }
```
